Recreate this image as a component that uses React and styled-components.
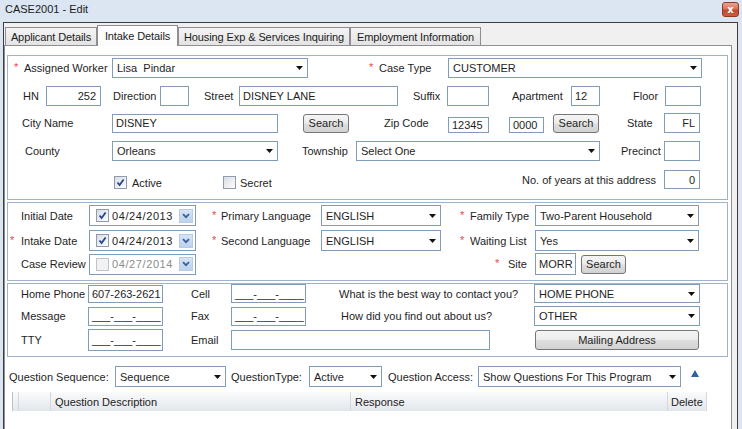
import React from "react"
import styled, { createGlobalStyle } from "styled-components"

const GlobalStyle = createGlobalStyle`
  html, body {
    margin: 0;
    padding: 0;
  }
  body {
    background: #dce6f2;
    font-family: "Liberation Sans", Arial, sans-serif;
    font-size: 11px;
    color: #1e1e1e;
  }
`

const Window = styled.div`
  width: 742px;
  height: 429px;
  overflow: hidden;
  display: flex;
  flex-direction: column;
  background: #dce6f2;
`

const TitleBar = styled.div`
  flex: none;
  height: 22px;
  display: flex;
  align-items: flex-start;
  justify-content: space-between;
  padding: 0 3px 0 5px;
  box-sizing: border-box;
`

const Title = styled.span`
  font-size: 11px;
  line-height: 18px;
  color: #1b1b1b;
`

const CloseButton = styled.div`
  width: 17px;
  height: 15px;
  margin-top: 2px;
  box-sizing: border-box;
  border: 1px solid #8b3b26;
  border-radius: 3px;
  background: linear-gradient(#eba58f, #d6735a 45%, #bf4a2f 55%, #cc5c40);
  color: #fff;
  font: bold 10px "DejaVu Sans", sans-serif;
  display: flex;
  align-items: center;
  justify-content: center;
`

const Body = styled.div`
  flex: 1;
  min-height: 0;
  margin: 0 4px 0 3px;
  border: 1px solid #3d3d3d;
  border-bottom: none;
  background: #f0f0f0;
  display: flex;
  flex-direction: column;
`

const TabStrip = styled.div`
  flex: none;
  display: flex;
  align-items: flex-end;
  height: 23px;
  margin: 0 0 -1px 1px;
  position: relative;
  z-index: 1;
`

const Tab = styled.div`
  box-sizing: border-box;
  width: ${(p) => p.$w}px;
  height: ${(p) => (p.$active ? 21 : 18)}px;
  margin-bottom: ${(p) => (p.$active ? 0 : 1)}px;
  border: 1px solid #8c8e94;
  border-bottom: none;
  background: ${(p) => (p.$active ? "#fcfcfc" : "linear-gradient(#f4f4f4, #e3e3e3)")};
  display: flex;
  align-items: center;
  justify-content: center;
  font-size: 11px;
  letter-spacing: -0.1px;
  color: #1b1b1b;
  padding-top: ${(p) => (p.$active ? 0 : 1)}px;
`

const Panel = styled.div`
  flex: 1;
  background: #fff;
  border: 1px solid #8d8f93;
  border-bottom: none;
  margin-right: 5px;
  padding: 9px 3px 0 2px;
`

const Section = styled.div`
  border: 1px solid #9fb3cc;
  margin-top: ${(p) => p.$mt || 0}px;
  padding: ${(p) => p.$pt}px 0 ${(p) => p.$pb}px;
`

const Row = styled.div`
  display: flex;
  align-items: ${(p) => p.$align || "center"};
  height: ${(p) => p.$h}px;
  margin-top: ${(p) => p.$mt || 0}px;
`

const Label = styled.span`
  flex: none;
  width: ${(p) => p.$w}px;
  margin-left: ${(p) => p.$ml || 0}px;
  align-self: ${(p) => p.$self || "auto"};
  white-space: nowrap;
  display: flex;
  align-items: center;
`

const Req = styled.span`
  flex: none;
  width: ${(p) => p.$w || 10}px;
  color: #e5484b;
  margin-top: -2px;
`

const TextBox = styled.div`
  flex: none;
  box-sizing: border-box;
  width: ${(p) => p.$w}px;
  height: ${(p) => p.$h || 20}px;
  margin-left: ${(p) => p.$ml || 0}px;
  align-self: ${(p) => (p.$bottom ? "flex-end" : "center")};
  border: 1px solid #7f9db9;
  background: #fff;
  padding: 0 ${(p) => (p.$right ? 4 : 3)}px;
  display: flex;
  align-items: center;
  justify-content: ${(p) => (p.$right ? "flex-end" : "flex-start")};
  white-space: pre;
  overflow: hidden;
`

const SelectBox = styled.div`
  flex: none;
  box-sizing: border-box;
  width: ${(p) => p.$w}px;
  height: ${(p) => p.$h || 20}px;
  margin-left: ${(p) => p.$ml || 0}px;
  border: 1px solid #7f9db9;
  background: #fff;
  display: flex;
  align-items: center;
  justify-content: space-between;
  padding: 0 4px 0 4px;
  white-space: pre;
`

const Caret = styled.svg`
  flex: none;
`

const Select = ({ value, ...rest }) => (
  <SelectBox {...rest}>
    <span>{value}</span>
    <Caret width="7" height="4" viewBox="0 0 7 4">
      <path d="M0 0H7L3.5 4Z" fill="#111" />
    </Caret>
  </SelectBox>
)

const Button = styled.button`
  flex: none;
  box-sizing: border-box;
  width: ${(p) => p.$w}px;
  height: ${(p) => p.$h || 19}px;
  margin-left: ${(p) => p.$ml || 0}px;
  border: 1px solid #767676;
  border-radius: 3px;
  background: linear-gradient(#f5f5f5, #ececec 48%, #dedede 52%, #d2d2d2);
  padding: 0;
  font: 11px "Liberation Sans", Arial, sans-serif;
  color: #1e1e1e;
`

const CheckFrame = styled.span`
  flex: none;
  box-sizing: border-box;
  width: 13px;
  height: 13px;
  margin-left: ${(p) => p.$ml || 0}px;
  border: 1px solid ${(p) => (p.$disabled ? "#bfc4ca" : "#8e9bb0")};
  background: ${(p) =>
    p.$disabled ? "#f2f2f2" : "linear-gradient(135deg, #d9dde3, #fdfdfd)"};
  display: flex;
  align-items: center;
  justify-content: center;
`

const CheckBox = ({ checked, disabled, ml }) => (
  <CheckFrame $disabled={disabled} $ml={ml}>
    {checked && (
      <svg width="9" height="9" viewBox="0 0 9 9">
        <path d="M1.5 4.5L3.6 7L7.6 1.5" stroke="#21468f" strokeWidth="1.8" fill="none" />
      </svg>
    )}
  </CheckFrame>
)

const DateBox = styled.div`
  flex: none;
  box-sizing: border-box;
  width: 107px;
  height: 21px;
  border: 1px solid #7f9db9;
  background: #fff;
  display: flex;
  align-items: center;
  padding: 0 2px 0 6px;
`

const DateText = styled.span`
  margin-left: 3px;
  letter-spacing: 0.6px;
  color: ${(p) => (p.$disabled ? "#8c8c8c" : "#1e1e1e")};
`

const DropBtn = styled.span`
  margin-left: auto;
  width: 14px;
  height: 14px;
  box-sizing: border-box;
  border: 1px solid #b6cbe6;
  background: linear-gradient(#d6e4f6, #bcd2ee);
  display: flex;
  align-items: center;
  justify-content: center;
`

const DatePicker = ({ value, checked, disabled }) => (
  <DateBox>
    <CheckBox checked={checked} disabled={disabled} />
    <DateText $disabled={disabled}>{value}</DateText>
    <DropBtn>
      <svg width="8" height="6" viewBox="0 0 8 6">
        <path d="M1 1.2L4 4.2L7 1.2" stroke="#3d5e92" strokeWidth="1.8" fill="none" />
      </svg>
    </DropBtn>
  </DateBox>
)

const QuestionBar = styled.div`
  display: flex;
  align-items: center;
  height: 21px;
  margin-top: 9px;
`

const SortUp = styled.svg`
  flex: none;
  margin: -7px 0 0 10px;
`

const Grid = styled.div`
  margin: 5px 0 0 5px;
  width: 695px;
`

const GridHead = styled.div`
  display: flex;
  height: 19px;
  border-left: 1px solid #b9c1cc;
  background: linear-gradient(#fbfbfc, #e2e6eb);
`

const HeadCell = styled.div`
  flex: none;
  box-sizing: border-box;
  width: ${(p) => p.$w}px;
  padding-left: ${(p) => p.$pl || 4}px;
  border-right: 1px solid #d3d8de;
  display: flex;
  align-items: center;
  color: #222;
`

const Phone = "___-___-____"

const App = () => (
  <>
    <GlobalStyle />
    <Window>
      <TitleBar>
        <Title>CASE2001 - Edit</Title>
        <CloseButton>x</CloseButton>
      </TitleBar>
      <Body>
        <TabStrip>
          <Tab $w={92}>Applicant Details</Tab>
          <Tab $w={81} $active>Intake Details</Tab>
          <Tab $w={172}>Housing Exp &amp; Services Inquiring</Tab>
          <Tab $w={131}>Employment Information</Tab>
        </TabStrip>
        <Panel>
          <Section $pt={2} $pb={10}>
            <Row $h={20}>
              <Label $ml={6} $w={98}><Req>*</Req>Assigned Worker</Label>
              <Select $w={196} value="Lisa  Pindar" />
              <Label $ml={61} $w={79}><Req>*</Req>Case Type</Label>
              <Select $w={254} value="CUSTOMER" />
            </Row>
            <Row $h={20} $mt={8}>
              <Label $ml={15} $w={23}>HN</Label>
              <TextBox $w={55} $right>252</TextBox>
              <Label $ml={12} $w={47}>Direction</Label>
              <TextBox $w={29} />
              <Label $ml={15} $w={35}>Street</Label>
              <TextBox $w={159}>DISNEY LANE</TextBox>
              <Label $ml={15} $w={34}>Suffix</Label>
              <TextBox $w={42} />
              <Label $ml={23} $w={59}>Apartment</Label>
              <TextBox $w={29}>12</TextBox>
              <Label $ml={33} $w={32}>Floor</Label>
              <TextBox $w={36} />
            </Row>
            <Row $h={20} $mt={7}>
              <Label $ml={14} $w={90}>City Name</Label>
              <TextBox $w={166} $h={19}>DISNEY</TextBox>
              <Button $ml={25} $w={46}>Search</Button>
              <Label $ml={35} $w={64}>Zip Code</Label>
              <TextBox $w={41} $h={16} $bottom>12345</TextBox>
              <TextBox $ml={20} $w={35} $h={16} $bottom>0000</TextBox>
              <Button $ml={9} $w={46}>Search</Button>
              <Label $ml={28} $w={37}>State</Label>
              <TextBox $w={36} $right>FL</TextBox>
            </Row>
            <Row $h={22} $mt={7}>
              <Label $ml={17} $w={87}>County</Label>
              <Select $w={166} value="Orleans" />
              <Label $ml={24} $w={54}>Township</Label>
              <Select $w={244} value="Select One" />
              <Label $ml={21} $w={43}>Precinct</Label>
              <TextBox $w={36} />
            </Row>
            <Row $h={19} $mt={8} $align="flex-end">
              <CheckBox ml={106} checked />
              <Label $ml={5} $w={91}>Active</Label>
              <CheckBox />
              <Label $ml={4} $w={282}>Secret</Label>
              <Label $w={142} $self="center">No. of years at this address</Label>
              <TextBox $w={36} $h={19} $right>0</TextBox>
            </Row>
          </Section>

          <Section $mt={2} $pt={2} $pb={4}>
            <Row $h={21}>
              <Label $ml={13} $w={68}>Initial Date</Label>
              <DatePicker value="04/24/2013" checked />
              <Label $ml={16} $w={109}><Req $w={9}>*</Req>Primary Language</Label>
              <Select $w={120} $h={21} value="ENGLISH" />
              <Label $ml={19} $w={75}><Req>*</Req>Family Type</Label>
              <Select $w={164} $h={21} value="Two-Parent Household" />
            </Row>
            <Row $h={21} $mt={4}>
              <Label $ml={2} $w={79}><Req $w={11}>*</Req>Intake Date</Label>
              <DatePicker value="04/24/2013" checked />
              <Label $ml={16} $w={109}><Req $w={9}>*</Req>Second Language</Label>
              <Select $w={120} $h={21} value="ENGLISH" />
              <Label $ml={19} $w={75}><Req>*</Req>Waiting List</Label>
              <Select $w={164} $h={21} value="Yes" />
            </Row>
            <Row $h={24} $mt={1}>
              <Label $ml={13} $w={68}>Case Review</Label>
              <DatePicker value="04/27/2014" disabled />
              <Label $ml={299} $w={40}><Req $w={13}>*</Req>Site</Label>
              <TextBox $w={41} $h={22}>MORR</TextBox>
              <Button $ml={5} $w={45}>Search</Button>
            </Row>
          </Section>

          <Section $mt={2} $pt={0} $pb={5}>
            <Row $h={19}>
              <Label $ml={13} $w={67}>Home Phone</Label>
              <TextBox $w={75} $h={18}>607-263-2621</TextBox>
              <Label $ml={28} $w={40}>Cell</Label>
              <TextBox $w={75} $h={19}>{Phone}</TextBox>
              <Label $ml={33} $w={195}>What is the best way to contact you?</Label>
              <Select $w={166} $h={19} value="HOME PHONE" />
            </Row>
            <Row $h={20} $mt={3}>
              <Label $ml={13} $w={67}>Message</Label>
              <TextBox $w={75} $h={19}>{Phone}</TextBox>
              <Label $ml={28} $w={40}>Fax</Label>
              <TextBox $w={75} $h={19}>{Phone}</TextBox>
              <Label $ml={35} $w={193}>How did you find out about us?</Label>
              <Select $w={166} $h={20} value="OTHER" />
            </Row>
            <Row $h={23} $mt={2}>
              <Label $ml={13} $w={67}>TTY</Label>
              <TextBox $w={75} $h={22}>{Phone}</TextBox>
              <Label $ml={28} $w={40}>Email</Label>
              <TextBox $w={259} $h={20} />
              <Button $ml={45} $w={164} $h={20}>Mailing Address</Button>
            </Row>
          </Section>

          <QuestionBar>
            <Label $ml={2} $w={106}>Question Sequence:</Label>
            <Select $w={111} $h={21} value="Sequence" />
            <Label $ml={5} $w={78}>QuestionType:</Label>
            <Select $w={73} $h={21} value="Active" />
            <Label $ml={6} $w={90}>Question Access:</Label>
            <Select $w={203} $h={21} value="Show Questions For This Program" />
            <SortUp width="8" height="7" viewBox="0 0 8 7">
              <path d="M4 0L8 7H0Z" fill="#2f5fa5" />
            </SortUp>
          </QuestionBar>

          <Grid>
            <GridHead>
              <HeadCell $w={6} />
              <HeadCell $w={32} />
              <HeadCell $w={300}>Question Description</HeadCell>
              <HeadCell $w={317}>Response</HeadCell>
              <HeadCell $w={39} $pl={3}>Delete</HeadCell>
            </GridHead>
          </Grid>
        </Panel>
      </Body>
    </Window>
  </>
)

export default App
